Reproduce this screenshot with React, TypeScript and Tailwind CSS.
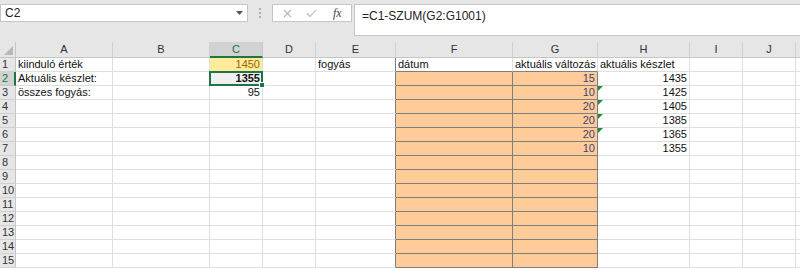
import React from 'react';

const COLS = ['A', 'B', 'C', 'D', 'E', 'F', 'G', 'H', 'I', 'J', ''];

const G_VALS: Record<number, string> = { 2: '15', 3: '10', 4: '20', 5: '20', 6: '20', 7: '10' };
const H_VALS: Record<number, string> = { 2: '1435', 3: '1425', 4: '1405', 5: '1385', 6: '1365', 7: '1355' };

const ErrorMark = () => (
  <svg className="absolute left-0 top-0" width="5" height="5" viewBox="0 0 5 5">
    <polygon points="0,0 5,0 0,5" fill="#1e8a3e" />
  </svg>
);

const Cell: React.FC<{ row: number; col: string }> = ({ row, col }) => {
  const base = 'relative h-[14px] border-r border-b border-[#dfdfdf] px-[2px] text-[11px] leading-[13px] text-[#111] whitespace-nowrap overflow-visible';
  const orange = row >= 2 && (col === 'F' || col === 'G');

  if (row === 1) {
    if (col === 'A') return <div className={base}>kiinduló érték</div>;
    if (col === 'C') return <div className={`${base} bg-[#ffeb9c] text-right !text-[#9c6500]`}>1450</div>;
    if (col === 'E') return <div className={`${base} border-r-[#7f7f7f]`}>fogyás</div>;
    if (col === 'F') return <div className={`${base} border-b-[#7f7f7f]`}>dátum</div>;
    if (col === 'G') return <div className={`${base} border-b-[#7f7f7f]`}>aktuális változás</div>;
    if (col === 'H') return <div className={base}>aktuális készlet</div>;
  }
  if (row === 2 && col === 'A') return <div className={base}>Aktuális készlet:</div>;
  if (row === 3 && col === 'A') return <div className={base}>összes fogyás:</div>;
  if (row === 2 && col === 'C')
    return (
      <div className={`${base} z-10 bg-[#f0f0f0] text-right font-bold`}>
        1355
        <div className="absolute -left-[1px] -top-[1px] -right-[1px] -bottom-[1px] border-2 border-[#217346]" />
        <div className="absolute -right-[3px] -bottom-[3px] w-[6px] h-[6px] bg-[#217346] border border-white" />
      </div>
    );
  if (row === 3 && col === 'C') return <div className={`${base} text-right`}>95</div>;
  if (row >= 2 && col === 'E') return <div className={`${base} border-r-[#7f7f7f]`} />;
  if (orange)
    return (
      <div className={`${base} bg-[#ffcc99] border-r-[#7f7f7f] border-b-[#7f7f7f] text-right !text-[#3f3f76]`}>
        {col === 'G' ? G_VALS[row] : ''}
      </div>
    );
  if (col === 'H' && H_VALS[row])
    return (
      <div className={`${base} text-right`}>
        {row >= 3 && row <= 6 && <ErrorMark />}
        {H_VALS[row]}
      </div>
    );
  return <div className={base} />;
};

export default function App() {
  const rows = Array.from({ length: 15 }, (_, i) => i + 1);

  return (
    <div className="w-[800px] h-[270px] overflow-hidden bg-white" style={{ fontFamily: '"Liberation Sans", Arial, sans-serif' }}>
      {/* formula bar */}
      <div className="h-[42px] bg-[#e6e6e6] flex items-start pt-[4px]">
        <div className="w-[248px] h-[18px] bg-white border border-[#c6c6c6] flex items-center justify-between pl-[4px] pr-[4px]">
          <span className="text-[12px] text-[#222]">C2</span>
          <svg width="7" height="4" viewBox="0 0 7 4">
            <polygon points="0,0 7,0 3.5,4" fill="#555" />
          </svg>
        </div>
        <div className="w-[24px] h-[18px] flex flex-col items-center justify-center gap-[2px]">
          <span className="w-[2px] h-[2px] bg-[#b0b0b0]" />
          <span className="w-[2px] h-[2px] bg-[#b0b0b0]" />
          <span className="w-[2px] h-[2px] bg-[#b0b0b0]" />
        </div>
        <div className="w-[80px] h-[18px] bg-white border border-[#c6c6c6] flex items-center pl-[10px] gap-[14px]">
          <svg width="9" height="9" viewBox="0 0 9 9">
            <path d="M1 1 L8 8 M8 1 L1 8" stroke="#b5b5b5" strokeWidth="1.1" />
          </svg>
          <svg width="11" height="9" viewBox="0 0 11 9">
            <path d="M1 4.5 L4 7.5 L10 1" stroke="#b5b5b5" strokeWidth="1.1" fill="none" />
          </svg>
          <span className="ml-[2px] text-[12px] italic text-[#444]" style={{ fontFamily: '"Liberation Serif", serif' }}>fx</span>
        </div>
        <div className="ml-[2px] flex-1 h-[32px] bg-white border border-r-0 border-[#c6c6c6] pl-[7px] pt-[2px] text-[12px] text-[#222]">
          =C1-SZUM(G2:G1001)
        </div>
      </div>

      {/* sheet grid */}
      <div className="grid grid-cols-[16px_97px_97px_53px_53px_80px_117px_85px_92px_53px_53px_1fr] bg-white">
        <div className="relative h-[16px] bg-[#e6e6e6] border-r border-b border-[#c6c6c6]">
          <svg className="absolute right-[2px] bottom-[2px]" width="9" height="9" viewBox="0 0 9 9">
            <polygon points="9,0 9,9 0,9" fill="#b8b8b8" />
          </svg>
        </div>
        {COLS.map((c, i) =>
          c === 'C' ? (
            <div key={i} className="h-[16px] bg-[#d2d2d2] border-r border-[#c6c6c6] border-b-2 border-b-[#217346] flex items-center justify-center text-[11px] text-[#217346]">
              {c}
            </div>
          ) : (
            <div key={i} className="h-[16px] bg-[#e6e6e6] border-r border-b border-[#d0d0d0] border-b-[#c6c6c6] flex items-center justify-center text-[11px] text-[#333]">
              {c}
            </div>
          )
        )}
        {rows.map((r) => (
          <React.Fragment key={r}>
            {r === 2 ? (
              <div className="h-[14px] bg-[#d2d2d2] border-r-2 border-r-[#217346] border-b border-b-[#c6c6c6] pl-[2px] text-[11px] leading-[13px] text-[#217346]">
                {r}
              </div>
            ) : (
              <div className="h-[14px] bg-[#e6e6e6] border-r border-r-[#c6c6c6] border-b border-b-[#d0d0d0] pl-[2px] text-[11px] leading-[13px] text-[#333]">
                {r}
              </div>
            )}
            {COLS.map((c, i) => (
              <Cell key={i} row={r} col={c || 'K'} />
            ))}
          </React.Fragment>
        ))}
      </div>
    </div>
  );
}
